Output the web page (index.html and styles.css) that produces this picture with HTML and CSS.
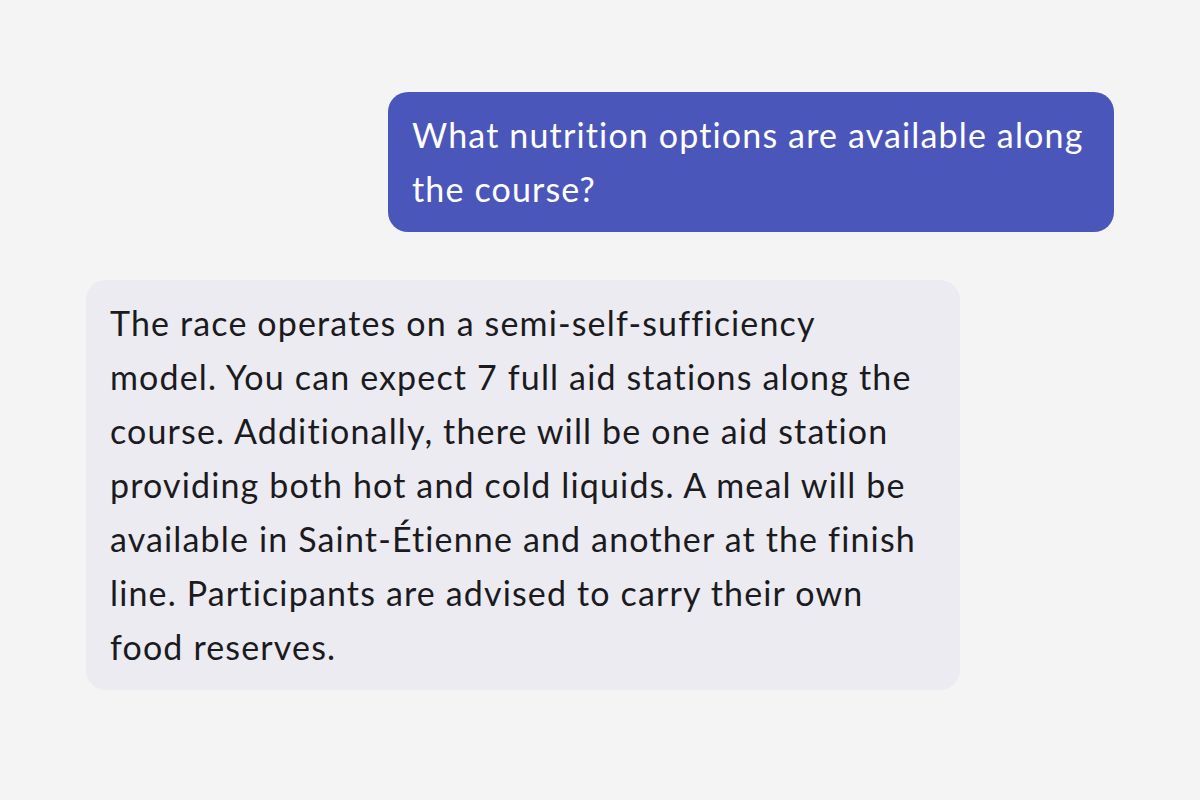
FILE: index.html
```html
<!DOCTYPE html>
<html lang="en">
<head>
<meta charset="utf-8">
<link rel="stylesheet" href="styles.css">
</head>
<body>
<main class="chat">
  <div class="msg msg-user">What nutrition options are available along the course?</div>
  <div class="msg msg-bot">The race operates on a semi-self-sufficiency<br>model. You can expect 7 full aid stations along the<br>course. Additionally, there will be one aid station<br>providing both hot and cold liquids. A meal will be<br>available in Saint-Étienne and another at the finish<br>line. Participants are advised to carry their own<br>food reserves.</div>
</main>
</body>
</html>
```
FILE: styles.css
```css
html, body {
  margin: 0;
  padding: 0;
  background: #f4f4f4;
  width: 1200px;
  height: 800px;
  overflow: hidden;
}
.chat {
  display: flex;
  flex-direction: column;
  gap: 48px;
  padding: 92px 86px 0 86px;
  font-family: Lato, "Noto Sans", sans-serif;
  font-size: 34px;
  line-height: 54px;
  letter-spacing: 1.15px;
  font-variant-ligatures: none;
}
.msg {
  box-sizing: border-box;
  padding: 16px 24px;
  border-radius: 20px;
}
.msg-user {
  align-self: flex-end;
  width: 726px;
  background: #4b56bb;
  color: #ffffff;
}
.msg-bot {
  align-self: flex-start;
  width: 874px;
  background: #ecebf1;
  color: #1b1b1f;
}
```
